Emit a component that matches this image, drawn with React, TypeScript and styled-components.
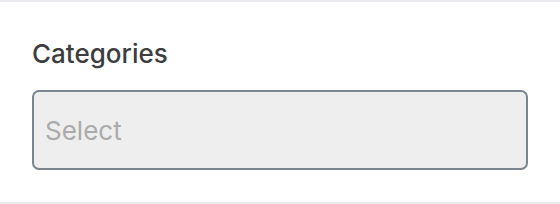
import styled, { createGlobalStyle } from "styled-components";

const GlobalStyle = createGlobalStyle`
  body {
    margin: 0;
    background: #ffffff;
    font-family: Inter, "Liberation Sans", sans-serif;
  }
`;

const Section = styled.section`
  box-sizing: border-box;
  height: 204px;
  padding: 37px 32px 0;
  border-top: 2px solid #ebebef;
  border-bottom: 2px solid #ebebef;
  display: flex;
  flex-direction: column;
  gap: 21px;
`;

const Label = styled.label`
  font-size: 26px;
  line-height: 30px;
  font-weight: 500;
  color: #3d3d3f;
`;

const SelectBox = styled.div`
  box-sizing: border-box;
  height: 80px;
  display: flex;
  align-items: center;
  padding: 1px 11px 0;
  background: #eeeeee;
  border: 2px solid #7b8591;
  border-radius: 7px;
  font-size: 26px;
  color: #ababab;
`;

export default function App() {
  return (
    <>
      <GlobalStyle />
      <Section>
        <Label>Categories</Label>
        <SelectBox>Select</SelectBox>
      </Section>
    </>
  );
}
